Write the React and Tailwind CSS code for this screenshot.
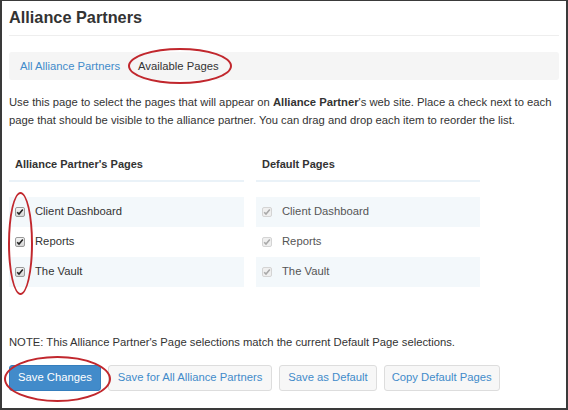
import { useState } from "react";

const PAGES = ["Client Dashboard", "Reports", "The Vault"];

function Ring({ className }) {
  // red annotation ellipse drawn over the screenshot
  return (
    <div
      className={
        "pointer-events-none absolute rounded-[50%] border-2 border-[#c1272d] " + className
      }
    />
  );
}

function Check({ checked, disabled, onToggle }) {
  return (
    <span
      role="checkbox"
      aria-checked={checked}
      aria-disabled={disabled}
      onClick={disabled ? undefined : onToggle}
      className={
        "flex h-[10px] w-[10px] items-center justify-center rounded-[2px] border " +
        (disabled
          ? "border-[#d4d4d4] bg-[#efefef]"
          : "cursor-pointer border-[#9a9a9a] bg-gradient-to-b from-[#f4f4f4] to-[#d6d6d6]")
      }
    >
      {checked && (
        <svg width="8" height="8" viewBox="0 0 8 8">
          <path
            d="M1.2 4.2 L3 6 L6.8 1.6"
            fill="none"
            stroke={disabled ? "#a8a8a8" : "#222"}
            strokeWidth="1.6"
          />
        </svg>
      )}
    </span>
  );
}

function PageRow({ label, idx, checked, disabled, onToggle }) {
  return (
    <div
      className={
        "flex h-[30px] items-center pl-[6px] " + (idx % 2 === 0 ? "bg-[#f3f8fb]" : "bg-white")
      }
    >
      <Check checked={checked} disabled={disabled} onToggle={onToggle} />
      <span className={"ml-[10px] text-[11.25px] " + (disabled ? "text-[#555]" : "text-[#333]")}>
        {label}
      </span>
    </div>
  );
}

export default function App() {
  const [checked, setChecked] = useState([true, true, true]);

  const toggle = (i) => setChecked((c) => c.map((v, j) => (j === i ? !v : v)));

  return (
    <div
      className="relative h-[410px] w-[568px] overflow-hidden border-t border-r-2 border-b-2 border-l-2 border-[#3a3a3a] bg-white text-[#333]"
      style={{ fontFamily: '"Liberation Sans", Arial, sans-serif' }}
    >
      <div className="px-[7px]">
        <h1 className="pt-[7px] pb-[8px] text-[16.3px] font-bold leading-[19px] text-[#333]">
          Alliance Partners
        </h1>
        <div className="border-t border-[#eeeeee]" />

        <div className="mt-[16px] flex h-[28px] items-center rounded-[3px] bg-[#f5f5f5] text-[11.25px]">
          <span className="ml-[11px] text-[#428bca]">All Alliance Partners</span>
          <span className="ml-[18px] text-[#333]">Available Pages</span>
        </div>

        <p className="mt-[13px] text-[11.25px] leading-[18px] text-[#333]">
          Use this page to select the pages that will appear on <b>Alliance Partner</b>'s web
          site. Place a check next to each page that should be visible to the alliance partner.
          You can drag and drop each item to reorder the list.
        </p>

        <div className="mt-[27px] flex gap-[12px]">
          <div className="w-[235px]">
            <div className="border-b-2 border-[#eaf2f8] pb-[7px] pl-[6px] text-[11px] font-bold text-[#333]">
              Alliance Partner's Pages
            </div>
            <div className="mt-[15px]">
              {PAGES.map((p, i) => (
                <PageRow key={p} label={p} idx={i} checked={checked[i]} onToggle={() => toggle(i)} />
              ))}
            </div>
          </div>
          <div className="w-[224px]">
            <div className="border-b-2 border-[#eaf2f8] pb-[7px] pl-[6px] text-[11px] font-bold text-[#333]">
              Default Pages
            </div>
            <div className="mt-[15px]">
              {PAGES.map((p, i) => (
                <PageRow key={p} label={p} idx={i} checked disabled />
              ))}
            </div>
          </div>
        </div>

        <p className="mt-[47px] text-[11.25px] leading-[16px] text-[#333]">
          NOTE: This Alliance Partner's Page selections match the current Default Page selections.
        </p>

        <div className="mt-[15px] flex gap-[7px] text-[11.25px]">
          <button className="h-[26px] rounded-[3px] border border-[#357ebd] bg-[#428bca] px-[8px] text-white">
            Save Changes
          </button>
          <button className="h-[26px] rounded-[3px] border border-[#dddddd] bg-[#f7f7f7] px-[9px] text-[#428bca]">
            Save for All Alliance Partners
          </button>
          <button className="h-[26px] rounded-[3px] border border-[#dddddd] bg-[#f7f7f7] px-[8px] text-[#428bca]">
            Save as Default
          </button>
          <button className="h-[26px] rounded-[3px] border border-[#dddddd] bg-[#f7f7f7] px-[7px] text-[#428bca]">
            Copy Default Pages
          </button>
        </div>
      </div>

      <Ring className="left-[126px] top-[47px] h-[36px] w-[104px]" />
      <Ring className="left-[6px] top-[191px] h-[103px] w-[25px]" />
      <Ring className="left-[2px] top-[355px] h-[46px] w-[107px]" />
    </div>
  );
}
